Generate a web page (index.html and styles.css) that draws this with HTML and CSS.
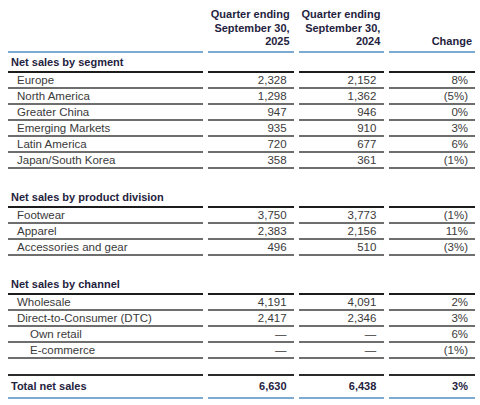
FILE: index.html
```html
<!DOCTYPE html>
<html>
<head>
<meta charset="utf-8">
<link rel="stylesheet" href="styles.css">
</head>
<body>
<table class="sales">
  <colgroup>
    <col class="c-label"><col class="c-num"><col class="c-num"><col class="c-num">
  </colgroup>
  <thead>
    <tr class="head">
      <th></th>
      <th>Quarter ending<br>September 30,<br>2025</th>
      <th>Quarter ending<br>September 30,<br>2024</th>
      <th>Change</th>
    </tr>
  </thead>
  <tbody>
    <tr class="section"><td>Net sales by segment</td><td></td><td></td><td></td></tr>
    <tr class="row"><td>Europe</td><td>2,328</td><td>2,152</td><td>8%</td></tr>
    <tr class="row"><td>North America</td><td>1,298</td><td>1,362</td><td>(5%)</td></tr>
    <tr class="row"><td>Greater China</td><td>947</td><td>946</td><td>0%</td></tr>
    <tr class="row"><td>Emerging Markets</td><td>935</td><td>910</td><td>3%</td></tr>
    <tr class="row"><td>Latin America</td><td>720</td><td>677</td><td>6%</td></tr>
    <tr class="row"><td>Japan/South Korea</td><td>358</td><td>361</td><td>(1%)</td></tr>
    <tr class="spacer"><td></td><td></td><td></td><td></td></tr>
    <tr class="section"><td>Net sales by product division</td><td></td><td></td><td></td></tr>
    <tr class="row"><td>Footwear</td><td>3,750</td><td>3,773</td><td>(1%)</td></tr>
    <tr class="row"><td>Apparel</td><td>2,383</td><td>2,156</td><td>11%</td></tr>
    <tr class="row"><td>Accessories and gear</td><td>496</td><td>510</td><td>(3%)</td></tr>
    <tr class="spacer"><td></td><td></td><td></td><td></td></tr>
    <tr class="section"><td>Net sales by channel</td><td></td><td></td><td></td></tr>
    <tr class="row"><td>Wholesale</td><td>4,191</td><td>4,091</td><td>2%</td></tr>
    <tr class="row"><td>Direct-to-Consumer (DTC)</td><td>2,417</td><td>2,346</td><td>3%</td></tr>
    <tr class="row sub"><td>Own retail</td><td>—</td><td>—</td><td>6%</td></tr>
    <tr class="row sub"><td>E-commerce</td><td>—</td><td>—</td><td>(1%)</td></tr>
    <tr class="blank"><td></td><td></td><td></td><td></td></tr>
    <tr class="total"><td>Total net sales</td><td>6,630</td><td>6,438</td><td>3%</td></tr>
  </tbody>
</table>
</body>
</html>
```

FILE: styles.css
```css
html, body {
  margin: 0;
  padding: 0;
  background: #ffffff;
}
body {
  padding: 8px 5px 0 3px;
  font-family: "Liberation Sans", Arial, sans-serif;
  color: #3a3a3a;
}
.sales {
  border-collapse: separate;
  border-spacing: 5px 0;
  width: 477px;
  margin-left: 0;
}
.c-label { width: 196px; }
.c-num { width: 86px; }

.sales th, .sales td {
  padding: 0;
  vertical-align: bottom;
}
.head th {
  font-weight: bold;
  font-size: 11px;
  line-height: 13.5px;
  color: #1f2340;
  text-align: right;
  padding: 0 4px 2px 0;
  border-bottom: 2px solid #7daad0;
}
.head th:last-child { padding-right: 3px; }

.section td {
  height: 17px;
  border-bottom: 2px solid #1c1c1c;
  font-weight: bold;
  font-size: 11px;
  color: #1f2340;
  vertical-align: middle;
  padding-left: 3px;
  padding-top: 1px;
}
.section td + td { padding-left: 0; }

.row td {
  height: 14px;
  line-height: 14px;
  font-size: 11.5px;
  border-bottom: 2px solid #6e6e6e;
  text-align: right;
  padding-right: 7px;
  vertical-align: middle;
}
.row td:first-child {
  text-align: left;
  padding-left: 9px;
  padding-right: 0;
}
.row.sub td:first-child { padding-left: 22px; }
.row td:nth-child(3) { padding-right: 8px; }

.spacer td { height: 19px; }

.blank td {
  height: 15px;
  border-bottom: 2px solid #2a2a2a;
}

.total td {
  height: 21px;
  font-weight: bold;
  font-size: 11px;
  color: #1f2340;
  border-bottom: 2px solid #7daad0;
  text-align: right;
  padding-right: 7px;
  vertical-align: middle;
}
.total td:first-child {
  text-align: left;
  padding-left: 3px;
  padding-right: 0;
}
.total td:nth-child(3) { padding-right: 8px; }
```
